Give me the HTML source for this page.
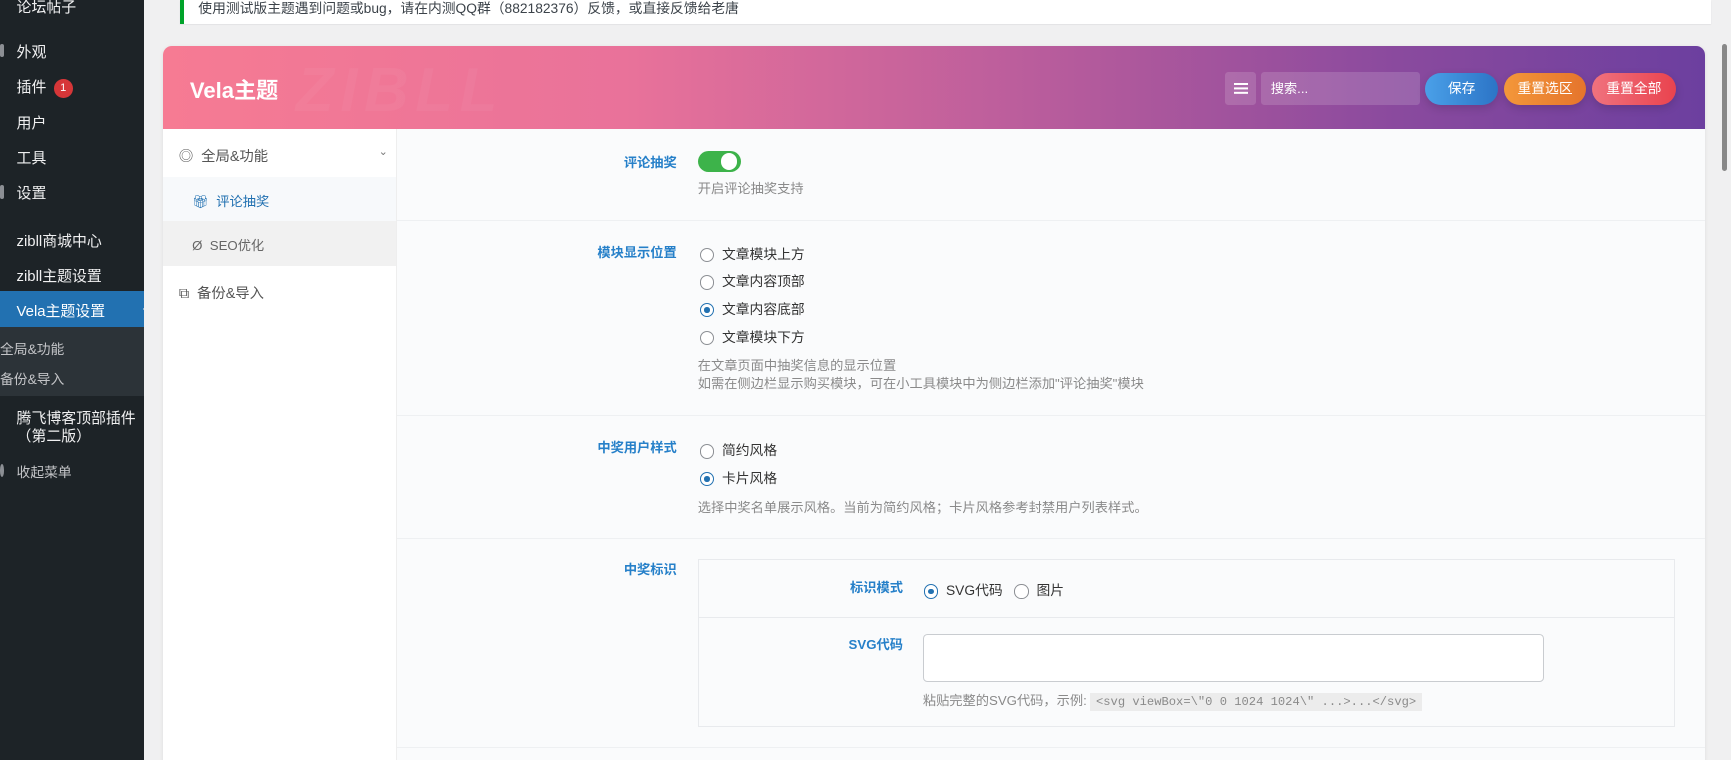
<!DOCTYPE html>
<html><head><meta charset="utf-8"><style>
html,body{margin:0;padding:0;overflow:hidden}
body{zoom:1.104;width:1568px;height:688px;background:#f0f0f1;font-family:"Liberation Sans","Noto Sans CJK SC",sans-serif;position:relative;font-size:13px;color:#333}
.a{position:absolute}
#sb{left:0;top:0;width:130px;height:688px;background:#1d2327}
.mi{position:absolute;left:15px;color:#f0f0f1;font-size:13.5px;white-space:nowrap}
.ic{position:absolute;left:0;width:4px;height:12px;background:#8c8f94;border-radius:2px}
.notice{left:163px;top:0;width:1383px;height:22px;background:#fff;border-left:4px solid #00a32a;box-shadow:0 1px 1px rgba(0,0,0,.08)}
.card{left:148px;top:42px;width:1396px;height:660px;background:#fafbfc;border-radius:8px;overflow:hidden;box-shadow:0 1px 4px rgba(0,0,0,.08)}
.hdr{left:0;top:0;width:1396px;height:75px;background:linear-gradient(90deg,#f67b93 0%,#e9729a 30%,#b35a9c 60%,#8a4a9e 80%,#6c3f9f 100%)}
.btn{position:absolute;top:24px;height:29px;border-radius:15px;color:#fff;font-size:12.5px;text-align:center;line-height:29px;box-shadow:0 3px 8px rgba(0,0,0,.15)}
.nav{left:0;top:75px;width:211px;height:600px;background:#fff;border-right:1px solid #eee}
.lbl{position:absolute;color:#2680c9;font-weight:bold;font-size:12px;text-align:right;white-space:nowrap}
.rad{position:absolute;white-space:nowrap;font-size:12.5px;color:#333}
.rad i{display:inline-block;width:13px;height:13px;border:1px solid #8c8f94;border-radius:50%;vertical-align:-3px;margin-right:7px;background:#fff;box-sizing:border-box;position:relative}
.rad i.on{border-color:#2271b1}
.rad i.on:after{content:"";position:absolute;left:3px;top:3px;width:5px;height:5px;border-radius:50%;background:#2271b1}
.desc{position:absolute;color:#8a8a8a;font-size:12px;white-space:nowrap;line-height:17px}
.sep{position:absolute;left:212px;width:1184px;height:1px;background:#eef0f2}
</style></head><body>
<div id="sb" class="a">
<div class="mi" style="top:-4px">论坛帖子</div>
<div class="mi" style="top:37px">外观</div><div class="ic" style="top:40px"></div>
<div class="mi" style="top:69px">插件 <span style="display:inline-block;width:17px;height:17px;border-radius:50%;background:#d63638;color:#fff;font-size:10px;text-align:center;line-height:17px;vertical-align:1px;margin-left:3px">1</span></div>
<div class="mi" style="top:101px">用户</div>
<div class="mi" style="top:133px">工具</div>
<div class="mi" style="top:165px">设置</div><div class="ic" style="top:168px"></div>
<div class="mi" style="top:208px">zibll商城中心</div>
<div class="mi" style="top:240px">zibll主题设置</div>
<div class="a" style="left:0;top:264px;width:130px;height:32px;background:#2271b1"></div>
<div class="mi" style="top:272px;color:#fff">Vela主题设置</div>
<div class="a" style="left:122px;top:273px;width:0;height:0;border:8px solid transparent;border-right-color:#f0f0f1"></div>
<div class="a" style="left:0;top:296px;width:130px;height:63px;background:#2c3338"></div>
<div class="mi" style="top:306px;left:0;font-size:12.5px;color:#c3c4c7">全局&amp;功能</div>
<div class="mi" style="top:333px;left:0;font-size:12.5px;color:#c3c4c7">备份&amp;导入</div>
<div class="mi" style="top:369px">腾飞博客顶部插件</div>
<div class="mi" style="top:385px">（第二版）</div>
<div class="mi" style="top:418px;color:#c3c4c7;font-size:12.5px">收起菜单</div><div class="ic" style="top:420px;border-radius:50%"></div>
</div>
<div class="a notice"><div class="a" style="left:13px;top:-3px;font-size:12.5px;color:#3c434a;white-space:nowrap">使用测试版主题遇到问题或bug，请在内测QQ群（882182376）反馈，或直接反馈给老唐</div></div>
<div class="a card">
 <div class="a hdr">
  <div class="a" style="left:24px;top:24px;color:#fff;font-weight:bold;font-size:20px">Vela主题</div>
  <div class="a" style="left:120px;top:8px;color:rgba(255,255,255,.04);font-weight:bold;font-size:56px;font-style:italic;letter-spacing:6px">ZIBLL</div>
  <div class="a" style="left:962px;top:23px;width:28px;height:30px;background:rgba(255,255,255,.15);border-radius:3px"><div class="a" style="left:8px;top:10px;width:12px;height:2px;background:#fff;box-shadow:0 4px 0 #fff,0 8px 0 #fff"></div></div>
  <div class="a" style="left:994px;top:23px;width:144px;height:30px;background:rgba(255,255,255,.15);border-radius:3px;color:#fff;font-size:12px;line-height:30px;text-indent:9px">搜索...</div>
  <div class="btn" style="left:1143px;width:66px;background:linear-gradient(90deg,#4aa0e8,#2c74c6)">保存</div>
  <div class="btn" style="left:1214px;width:75px;background:linear-gradient(90deg,#f3973a,#e5742c)">重置选区</div>
  <div class="btn" style="left:1294px;width:76px;background:linear-gradient(90deg,#f0727e,#e9434e)">重置全部</div>
 </div>
 <div class="a nav">
  <div class="a" style="left:14px;top:14px;font-size:13px;color:#555">◎ &nbsp;全局&amp;功能</div>
  <div class="a" style="left:195px;top:14px;font-size:10px;color:#777">⌄</div>
  <div class="a" style="left:0;top:43px;width:211px;height:40px;background:#f7f9fb"></div>
  <div class="a" style="left:26px;top:56px;font-size:12px;color:#2271b1">🎁︎ &nbsp;评论抽奖</div>
  <div class="a" style="left:0;top:83px;width:211px;height:41px;background:#f1f1f1"></div>
  <div class="a" style="left:26px;top:96px;font-size:12px;color:#666">Ø &nbsp;SEO优化</div>
  <div class="a" style="left:14px;top:138px;font-size:13px;color:#555">⧉ &nbsp;备份&amp;导入</div>
 </div>
 <div class="lbl" style="right:931px;top:96px">评论抽奖</div>
 <div class="a" style="left:484px;top:95px;width:39px;height:19px;border-radius:10px;background:#3db34a"><div class="a" style="left:21px;top:2px;width:15px;height:15px;border-radius:50%;background:#fff"></div></div>
 <div class="desc" style="left:484px;top:121px">开启评论抽奖支持</div>
 <div class="sep" style="top:157px"></div>
 <div class="lbl" style="right:931px;top:177px">模块显示位置</div>
 <div class="rad" style="left:486px;top:178px"><i></i>文章模块上方</div>
 <div class="rad" style="left:486px;top:203px"><i></i>文章内容顶部</div>
 <div class="rad" style="left:486px;top:228px"><i class="on"></i>文章内容底部</div>
 <div class="rad" style="left:486px;top:253px"><i></i>文章模块下方</div>
 <div class="desc" style="left:484px;top:281px">在文章页面中抽奖信息的显示位置<br>如需在侧边栏显示购买模块，可在小工具模块中为侧边栏添加"评论抽奖"模块</div>
 <div class="sep" style="top:334px"></div>
 <div class="lbl" style="right:931px;top:354px">中奖用户样式</div>
 <div class="rad" style="left:486px;top:356px"><i></i>简约风格</div>
 <div class="rad" style="left:486px;top:381px"><i class="on"></i>卡片风格</div>
 <div class="desc" style="left:484px;top:410px">选择中奖名单展示风格。当前为简约风格；卡片风格参考封禁用户列表样式。</div>
 <div class="sep" style="top:445px"></div>
 <div class="lbl" style="right:931px;top:464px">中奖标识</div>
 <div class="a" style="left:484px;top:464px;width:883px;height:151px;border:1px solid #e8eaed;background:#fafbfc">
  <div class="lbl" style="right:698px;top:16px">标识模式</div>
  <div class="rad" style="left:204px;top:18px"><i class="on"></i>SVG代码</div>
  <div class="rad" style="left:286px;top:18px"><i></i>图片</div>
  <div class="a" style="left:0;top:52px;width:883px;height:1px;background:#e8eaed"></div>
  <div class="lbl" style="right:698px;top:67px">SVG代码</div>
  <div class="a" style="left:203px;top:67px;width:561px;height:42px;border:1px solid #c9ccd0;border-radius:4px;background:#fff"></div>
  <div class="desc" style="left:203px;top:120px">粘贴完整的SVG代码，示例: <span style="font-family:'Liberation Mono',monospace;font-size:11px;background:#ececec;padding:2px 5px">&lt;svg viewBox=\"0 0 1024 1024\" ...&gt;...&lt;/svg&gt;</span></div>
 </div>
 <div class="sep" style="top:635px"></div>
</div>
<div class="a" style="left:1558px;top:0;width:10px;height:688px;background:#f0f0f1"><div class="a" style="left:2px;top:40px;width:4px;height:115px;background:#888;border-radius:3px"></div></div>
</body></html>
